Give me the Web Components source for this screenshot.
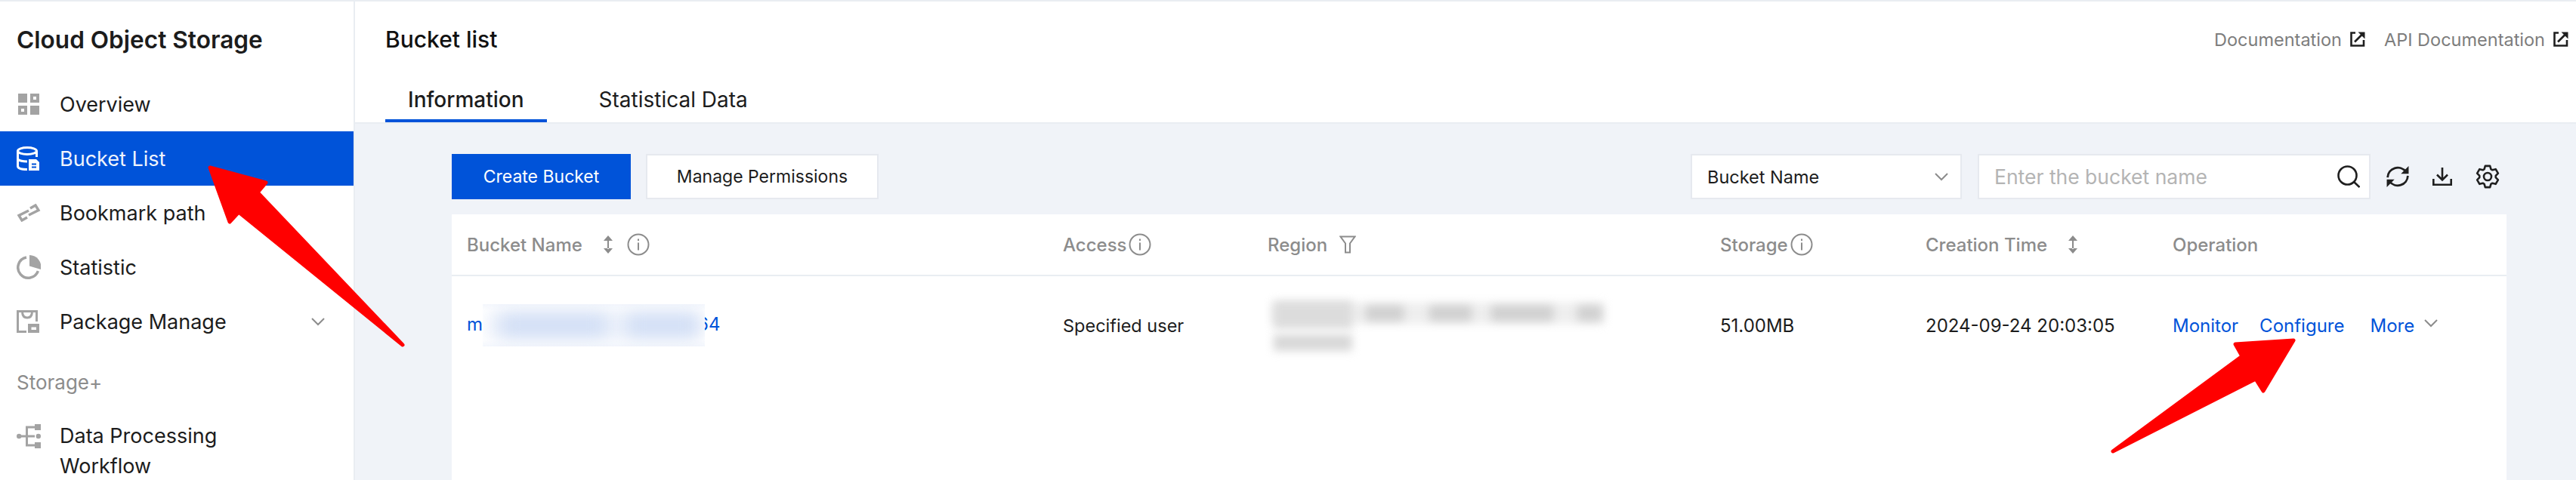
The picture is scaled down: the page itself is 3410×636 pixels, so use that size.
<!DOCTYPE html>
<html lang="en">
<head>
<meta charset="utf-8">
<title>Bucket list</title>
<style>
  html, body { margin: 0; height: 100%; overflow: hidden; background: #f0f3f8; }
  body { font-family: Inter, "Liberation Sans", sans-serif; color: #1c1c1c; }
</style>
</head>
<body>

<cos-app>
  <cos-sidebar slot="side" heading="Cloud Object Storage">
    <cos-nav-item icon="overview">Overview</cos-nav-item>
    <cos-nav-item icon="bucket" active>Bucket List</cos-nav-item>
    <cos-nav-item icon="link">Bookmark path</cos-nav-item>
    <cos-nav-item icon="pie">Statistic</cos-nav-item>
    <cos-nav-item icon="package" expandable>Package Manage</cos-nav-item>
    <cos-nav-group>Storage+</cos-nav-group>
    <cos-nav-item icon="flow" wrap>Data Processing Workflow</cos-nav-item>
  </cos-sidebar>
  <cos-header slot="head" heading="Bucket list"></cos-header>
  <cos-toolbar slot="main"></cos-toolbar>
  <cos-table slot="main"></cos-table>
</cos-app>

<script>
(function () {
  'use strict';

  // 六齿齿轮轮廓，手写路径总是歪，直接算
  function gearPath(cx, cy, outer, inner) {
    let d = '';
    for (let i = 0; i < 6; i++) {
      const a = i * Math.PI / 3 - Math.PI / 2;
      [[-0.42, inner], [-0.22, outer], [0.22, outer], [0.42, inner]].forEach(function (p, j) {
        const x = cx + p[1] * Math.cos(a + p[0]);
        const y = cy + p[1] * Math.sin(a + p[0]);
        d += (i === 0 && j === 0 ? 'M' : 'L') + x.toFixed(2) + ' ' + y.toFixed(2);
      });
    }
    return d + 'z';
  }

  // 侧栏和工具栏共用的图标
  const ICONS = {
    overview: '<svg viewBox="0 0 30 30" width="30" height="30" fill="#a3a3a3"><path fill-rule="evenodd" d="M2 1h12v12H2zM18 1h12v12H18zm4 4v4h4V5zM2 17h12v12H2zm4 4v4h4v-4zM18 17h12v12H18z"/></svg>',
    bucket: '<svg viewBox="0 0 30 32" width="30" height="32" fill="none" stroke="#fff" stroke-width="3"><ellipse cx="14" cy="6" rx="12.500" ry="4.500"/><path d="M1.500 6v20c0 3 4.500 4.500 12.500 4.500M26.500 6v8M1.500 17c2.500 2 6.500 3 12.500 3"/><path d="M16 17h10l4 4v11H16z" fill="#fff" stroke="none"/><path d="M20 23.500h6M20 27.500h6" stroke="#0053d9" stroke-width="2"/></svg>',
    link: '<svg viewBox="0 0 32 24" width="32" height="24" fill="none" stroke="#a3a3a3" stroke-width="3.400"><path d="M16 9 3 15.500 7 22l7-4"/><path d="M16 15 29 8.500 25 2l-7 4"/></svg>',
    pie: '<svg viewBox="0 0 32 32" width="32" height="32"><path d="M13 3A13.700 13.700 0 1 0 28.400 21.200" fill="none" stroke="#a3a3a3" stroke-width="3.500"/><path d="M17 0a15.500 15.500 0 0 1 15 19L17 14.500z" fill="#a3a3a3"/></svg>',
    package: '<svg viewBox="0 0 30 30" width="30" height="30"><path d="M13 28.500H1.500v-27h25V15" fill="none" stroke="#a3a3a3" stroke-width="3"/><path d="M7.500 3c.5 5 3.500 7 6.500 7s6-2 6.500-7" fill="none" stroke="#a3a3a3" stroke-width="3"/><path fill-rule="evenodd" d="M15 18h15v12H15zm4.500 4.500V26H26v-3.500z" fill="#a3a3a3"/></svg>',
    flow: '<svg viewBox="0 0 32 32" width="32" height="32" fill="#a3a3a3"><circle cx="3.200" cy="16" r="3.200"/><circle cx="28.800" cy="16" r="3.200"/><path d="M24 0h8v8h-8zM24 24h8v8h-8zM12 2.500h12v3h-9v9h9v3h-9v9h9v3H12V17.500H4v-3h8z"/></svg>',
    ext: '<svg viewBox="0 0 20 20" width="20" height="20" fill="none" stroke="#1f1f1f" stroke-width="2.600"><path d="M7 1.500H1.500v17h16.500V11"/><path d="M6 13.500 16 3.500"/><path d="M10.500 .5h9v9z" fill="#1f1f1f" stroke="none"/></svg>',
    chev: '<svg viewBox="0 0 18 11" width="18" height="11" fill="none" stroke="#8c8c8c" stroke-width="2"><path d="M1 1l8 8 8-8"/></svg>',
    sort: '<svg viewBox="0 0 12 24" width="12" height="24" fill="#8c8c8c"><path d="M6 0l6 7H0zM6 24l6-7H0zM5 6h2v12H5z"/></svg>',
    info: '<svg viewBox="0 0 30 30" width="30" height="30" fill="none" stroke="#8c8c8c" stroke-width="2"><circle cx="15" cy="15" r="13.500"/><path d="M15 12.500v10M15 7.500v2.500"/></svg>',
    filter: '<svg viewBox="0 0 22 24" width="22" height="24" fill="none" stroke="#8c8c8c" stroke-width="2"><path d="M1.500 1.500h19L14 10.500V22.500H8V10.500z"/></svg>',
    search: '<svg viewBox="0 0 30 30" width="30" height="30" fill="none" stroke="#1f1f1f" stroke-width="2.600"><circle cx="13.500" cy="13.500" r="12"/><path d="M22 22l7.500 7"/></svg>',
    refresh: '<svg viewBox="0 0 28 28" width="30" height="30" fill="none" stroke="#1f1f1f" stroke-width="2.600"><path d="M1.500 15A12.500 12.500 0 0 1 24 8M26.500 13A12.500 12.500 0 0 1 4 20"/><path d="M27.500 1v9.500H18zM.5 27v-9.500H10z" fill="#1f1f1f" stroke="none"/></svg>',
    download: '<svg viewBox="0 0 26 24" width="26" height="24" fill="none" stroke="#1f1f1f" stroke-width="2.600"><path d="M13 0v16M6 9.500l7 7 7-7M1.300 15v7.700h23.400V15"/></svg>',
    gear: '<svg viewBox="0 0 32 32" width="32" height="32" fill="none" stroke="#1f1f1f" stroke-width="2.600" stroke-linejoin="round"><path d="' + gearPath(16, 16, 14.500, 10.800) + '"/><circle cx="16" cy="16" r="5"/></svg>'
  };

  function define(name, css, html) {
    customElements.define(name, class extends HTMLElement {
      connectedCallback() {
        if (this.shadowRoot) return;
        const root = this.attachShadow({ mode: 'open' });
        root.innerHTML = '<style>' + css + '</style>' + (typeof html === 'function' ? html(this) : html);
      }
    });
  }

  define('cos-app', `
    :host { display: block; position: relative; width: 3410px; height: 636px; overflow: hidden; background: #f0f3f8; border-top: 2px solid #e9edf2; box-sizing: border-box; }
    .shell { display: grid; grid-template-columns: 470px 1fr; height: 100%; }
    .right { display: flex; flex-direction: column; min-width: 0; }
    .content { padding: 40px 92px 0 128px; display: flex; flex-direction: column; gap: 20px; }
    svg.marks { position: absolute; left: 0; top: -2px; pointer-events: none; }
  `, `
    <div class="shell">
      <slot name="side"></slot>
      <div class="right">
        <slot name="head"></slot>
        <div class="content"><slot name="main"></slot></div>
      </div>
    </div>
    <svg class="marks" width="3410" height="636" fill="#ff0000" stroke="#ff0000" stroke-width="5" stroke-linejoin="round">
      <polygon points="278,222 352,242 341,255 533,457 316,281 304,294"/>
      <polygon points="3036,451 2959,456 2968,472 2797,598 2986,502 2996,518"/>
    </svg>
  `);

  define('cos-sidebar', `
    :host { display: block; background: #fff; border-right: 2px solid #e9edf2; height: 100%; box-sizing: border-box; }
    h1 { margin: 0; padding: 34px 0 0 22px; height: 100px; box-sizing: border-box; font-size: 31.600px; line-height: 34px; font-weight: 600; color: #1c1c1c; }
  `, el => `<h1>${el.getAttribute('heading')}</h1><slot></slot>`);

  define('cos-nav-item', `
    :host { display: flex; align-items: center; min-height: 72px; padding: 0 38px 0 22px; font-size: 27px; color: #1c1c1c; box-sizing: border-box; }
    :host([active]) { background: #0053d9; color: #f0f4fc; }
    :host([wrap]) { align-items: flex-start; padding-top: 22px; line-height: 40px; }
    .ico { width: 57px; flex: none; display: flex; }
    :host([wrap]) .ico { padding-top: 4px; }
    .txt { flex: 1; }
    :host([wrap]) .txt { max-width: 300px; }
    .chev { display: flex; }
  `, el => `
    <span class="ico">${ICONS[el.getAttribute('icon')]}</span>
    <span class="txt"><slot></slot></span>
    ${el.hasAttribute('expandable') ? '<span class="chev">' + ICONS.chev + '</span>' : ''}
  `);

  define('cos-nav-group', `
    :host { display: block; padding: 28px 0 0 22px; height: 74px; box-sizing: border-box; font-size: 26px; line-height: 34px; color: #8c8c8c; }
  `, '<slot></slot>');

  define('cos-header', `
    :host { display: block; background: #fff; border-bottom: 2px solid #e9edf2; height: 162px; box-sizing: border-box; padding: 0 10px 0 40px; }
    .top { display: flex; justify-content: space-between; align-items: center; height: 100px; }
    h2 { margin: 0; font-size: 30px; font-weight: 500; color: #111; }
    .links { display: flex; gap: 25px; font-size: 23.500px; color: #7d7d7d; }
    .links a { display: flex; align-items: center; gap: 11px; }
    .links svg { display: block; }
    .tabs { display: flex; gap: 69px; height: 60px; font-size: 28px; }
    .tab { padding: 10px 30px 0; line-height: 40px; box-sizing: border-box; }
    .tab.on { font-weight: 500; border-bottom: 4px solid #0053d9; }
    .tab + .tab { padding-left: 0; }
  `, el => `
    <div class="top">
      <h2>${el.getAttribute('heading')}</h2>
      <div class="links">
        <a>Documentation ${ICONS.ext}</a>
        <a>API Documentation ${ICONS.ext}</a>
      </div>
    </div>
    <div class="tabs">
      <div class="tab on">Information</div>
      <div class="tab">Statistical Data</div>
    </div>
  `);

  define('cos-toolbar', `
    :host { display: flex; align-items: center; height: 60px; font-size: 23px; }
    .btn { height: 60px; box-sizing: border-box; display: flex; align-items: center; justify-content: center; }
    .primary { width: 237px; background: #0053d9; color: #fff; }
    .plain { width: 308px; margin-left: 20px; background: #fff; border: 2px solid #e6e9ef; color: #1c1c1c; }
    .spacer { flex: 1; }
    .select, .search { height: 60px; box-sizing: border-box; background: #fff; border: 2px solid #e6e9ef; display: flex; align-items: center; }
    .select { width: 359px; padding: 0 16px 0 20px; justify-content: space-between; color: #1c1c1c; font-size: 23.500px; }
    .search { width: 520px; margin-left: 21px; padding: 0 12px 0 20px; justify-content: space-between; color: #b4b4b4; font-size: 26.500px; }
    .tools { display: flex; align-items: center; margin-left: 21px; width: 159px; gap: 31px; }
    svg { display: block; }
  `, `
    <div class="btn primary">Create Bucket</div>
    <div class="btn plain">Manage Permissions</div>
    <div class="spacer"></div>
    <div class="select"><span>Bucket Name</span>${ICONS.chev}</div>
    <div class="search"><span>Enter the bucket name</span>${ICONS.search}</div>
    <div class="tools">${ICONS.refresh}${ICONS.download}${ICONS.gear}</div>
  `);

  define('cos-table', `
    :host { display: block; background: #fff; height: 400px; font-size: 24px; }
    .row { display: grid; grid-template-columns: 789px 271px 599px 272px 327px 1fr; padding-left: 20px; }
    .head { height: 80px; align-items: center; border-bottom: 2px solid #e9edf2; color: #8c8c8c; font-weight: 500; }
    .body { height: 130px; align-items: center; color: #1c1c1c; }
    .cell { display: flex; align-items: center; min-width: 0; }
    .sortgap { margin-left: 28px; } .infogap { margin-left: 19px; } .tight { margin-left: 3px; } .filtgap { margin-left: 16px; }
    svg { display: block; flex: none; }
    a { color: #0053d9; }
    .access { font-size: 23.500px; }
    /* 打码块：盖住桶名中段，连“6”的左边一起挡掉 */
    .mask { display: inline-block; position: relative; width: 294px; height: 56px; margin-right: -10px; vertical-align: middle; overflow: hidden; background: linear-gradient(#f5f8fd, #fff 14%, #fff 86%, #f5f8fd); }
    .mask i { position: absolute; top: 14px; height: 28px; background: #d0ddf5; filter: blur(11px); }
    .mask .m0 { left: 6px; width: 282px; top: 8px; height: 40px; background: #edf2fb; }
    .m1 { left: 24px; width: 140px; } .m2 { left: 190px; width: 96px; }
    .region { position: relative; width: 450px; height: 92px; margin-left: -2px; }
    .region i { position: absolute; background: #d0d0d0; filter: blur(6px); height: 20px; top: 20px; }
    .ops { gap: 28px; }
    .more { display: flex; align-items: center; gap: 13px; margin-left: 6px; }
    .more svg { margin-bottom: 6px; }
  `, `
    <div class="row head">
      <div class="cell">Bucket Name<span class="sortgap">${ICONS.sort}</span><span class="infogap">${ICONS.info}</span></div>
      <div class="cell">Access<span class="tight">${ICONS.info}</span></div>
      <div class="cell">Region<span class="filtgap">${ICONS.filter}</span></div>
      <div class="cell">Storage<span class="tight">${ICONS.info}</span></div>
      <div class="cell">Creation Time<span class="sortgap">${ICONS.sort}</span></div>
      <div class="cell">Operation</div>
    </div>
    <div class="row body">
      <div class="cell"><a>m<span class="mask"><i class="m0"></i><i class="m1"></i><i class="m2"></i></span>64</a></div>
      <div class="cell access">Specified user</div>
      <div class="cell"><div class="region">
        <i style="left:8px;top:16px;width:440px;height:28px;background:#eeeeee"></i>
        <i style="left:10px;top:14px;width:104px;height:36px;background:#dcdcdc"></i>
        <i style="left:10px;top:58px;width:104px;height:22px;background:#d8d8d8"></i>
        <i style="left:132px;width:50px"></i>
        <i style="left:216px;width:56px"></i>
        <i style="left:298px;width:82px"></i>
        <i style="left:412px;width:32px"></i>
      </div></div>
      <div class="cell">51.00MB</div>
      <div class="cell">2024-09-24 20:03:05</div>
      <div class="cell ops"><a>Monitor</a><a>Configure</a><div class="more"><a>More</a>${ICONS.chev}</div></div>
    </div>
  `);
})();
</script>
</body>
</html>
